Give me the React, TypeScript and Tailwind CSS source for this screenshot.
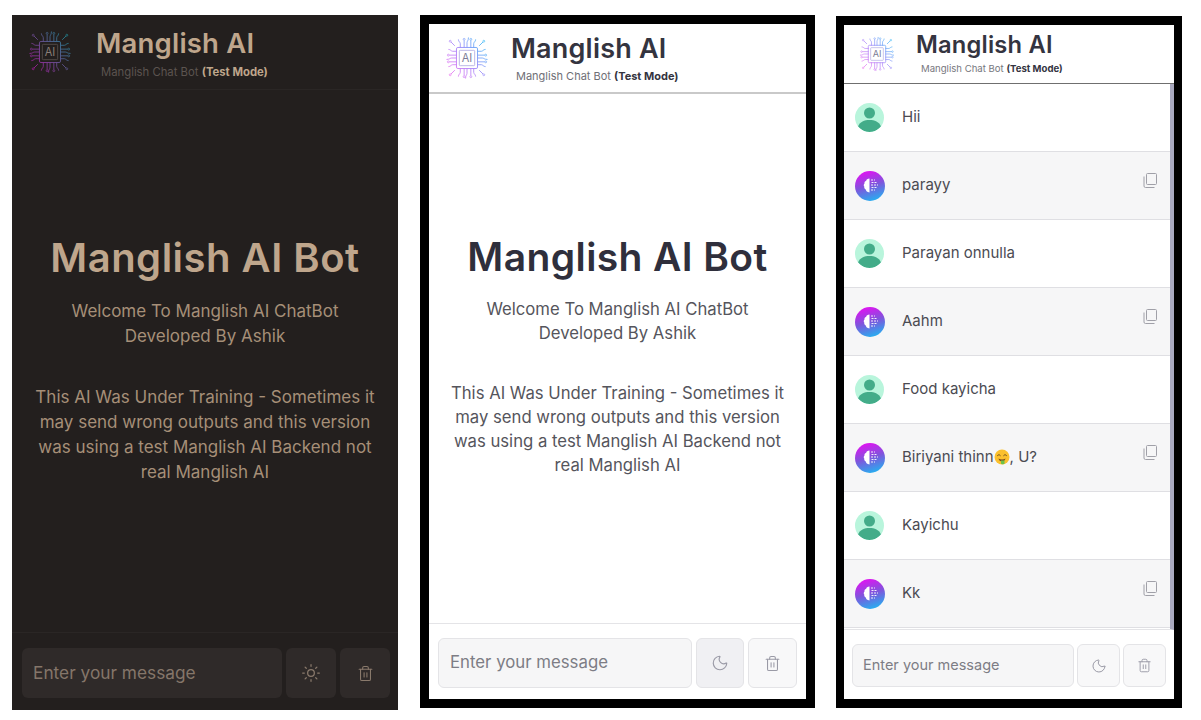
import { useId } from "react";
import { Moon, Sun, Trash2 } from "lucide-react";

function ChipLogo({ className, dark }: { className: string; dark?: boolean }) {
  const id = useId();
  const traces = [
    "M17 13V9c0-1.500-2-2-2-4", "M21 13V6", "M24 13V8c0-1.500 1.500-2 1.500-5", "M28 13V6", "M31 13V9c0-1.500 2-2 2-4",
    "M17 35v4c0 1.500-2 2-2 4", "M21 35v7", "M24 35v5c0 1.500-1.500 2-1.500 5", "M28 35v7", "M31 35v4c0 1.500 2 2 2 4",
    "M13 17H9c-1.500 0-2-2-4-2", "M13 21H6", "M13 24H8c-1.500 0-2 1.500-5 1.500", "M13 28H6", "M13 31H9c-1.500 0-2 2-4 2",
    "M35 17h4c1.500 0 2-2 4-2", "M35 21h7", "M35 24h5c1.500 0 2 1.500 5 1.500", "M35 28h7", "M35 31h4c1.500 0 2 2 4 2",
    "M11 11 7.500 7.500", "M37 11l3.500-3.500", "M11 37l-3.500 3.500", "M37 37l3.500 3.500",
  ];
  const dots = [[21, 4.500], [28, 4.500], [21, 43.500], [28, 43.500], [4.500, 21], [4.500, 28], [43.500, 21], [43.500, 28], [6.500, 6.500], [41.500, 6.500], [6.500, 41.500], [41.500, 41.500]];
  return (
    <svg viewBox="0 0 48 48" className={className} fill="none">
      <defs>
        <linearGradient id={id} gradientUnits="userSpaceOnUse" x1="4" y1="40" x2="44" y2="8">
          <stop offset="0" stopColor={dark ? "#a8189f" : "#ee78f0"} />
          <stop offset="0.500" stopColor={dark ? "#65508f" : "#a78bfa"} />
          <stop offset="1" stopColor={dark ? "#1c8b95" : "#3dbdf5"} />
        </linearGradient>
      </defs>
      <rect x="13" y="13" width="22" height="22" rx="1.500" stroke={`url(#${id})`} strokeWidth="1" />
      <rect x="16" y="16" width="16" height="16" rx="1" stroke={dark ? "#5d5450" : "#a9a3e0"} strokeWidth="0.800" />
      {traces.map((d) => (
        <path key={d} d={d} stroke={`url(#${id})`} strokeWidth="0.900" strokeLinecap="round" />
      ))}
      {dots.map(([cx, cy]) => (
        <circle key={`${cx}-${cy}`} cx={cx} cy={cy} r="1" stroke={`url(#${id})`} strokeWidth="0.700" />
      ))}
      <text x="24" y="28.300" textAnchor="middle" fontSize="11.500" fill={dark ? "#8a7f78" : "#7c7c96"} fontFamily="Inter, sans-serif">
        AI
      </text>
    </svg>
  );
}

function UserAvatar() {
  return (
    <div className="h-[29px] w-[29px] shrink-0 overflow-hidden rounded-full bg-[#b9f5dc]">
      <svg viewBox="0 0 29 29" className="h-full w-full">
        <circle cx="14.500" cy="10" r="5.500" fill="#43ac89" />
        <path d="M3 23.500c1.600-4.600 6.500-6.500 11.500-6.500s9.900 1.900 11.500 6.500c-2.800 3.500-6.800 5.500-11.500 5.500s-8.700-2-11.500-5.500z" fill="#43ac89" />
      </svg>
    </div>
  );
}

function BotAvatar() {
  const id = useId();
  return (
    <svg viewBox="0 0 30 30" className="h-[30px] w-[30px] shrink-0">
      <defs>
        <linearGradient id={id} x1="0.300" y1="0" x2="0.600" y2="1">
          <stop offset="0" stopColor="#e410f2" />
          <stop offset="0.500" stopColor="#7f55dc" />
          <stop offset="1" stopColor="#27aef0" />
        </linearGradient>
      </defs>
      <circle cx="15" cy="15" r="15" fill={`url(#${id})`} />
      <path d="M14.500 7.500c-2 0-3 1-3.300 2.200-1.300.4-1.900 1.500-1.700 2.700-.9.800-1 2.400-.2 3.200-.3 1.300.3 2.500 1.500 3 .2 1.500 1.300 2.800 3.700 2.900z" fill="#fff" />
      <path d="M16 9h4M16.500 11.500h5M16 14h7M16.500 16.500h5M16 19h4" stroke="#fff" strokeWidth="0.900" strokeDasharray="2 1" />
    </svg>
  );
}

function DroolEmoji() {
  return (
    <svg viewBox="0 0 16 16" className="inline-block h-[16px] w-[16px] align-[-3px]">
      <circle cx="8" cy="8" r="7.500" fill="#fbc02d" />
      <path d="M3.500 6.500c.8-1 2-1 2.800 0M9.700 6.500c.8-1 2-1 2.800 0" stroke="#6d4c1f" strokeWidth="1" fill="none" strokeLinecap="round" />
      <path d="M4.500 9.500c2 1.400 5 1.400 7 0-.4 2-1.800 3-3.500 3s-3.100-1-3.500-3z" fill="#7a4a1e" />
      <path d="M7 11.500h3.500v3c0 1-3.500 1-3.500 0z" fill="#6cc24a" />
    </svg>
  );
}

function CopyIcon() {
  return (
    <svg viewBox="0 0 14 15" className="mb-[11px] h-[15px] w-[14px] shrink-0" fill="none" stroke="#a0a0a8" strokeWidth="1">
      <rect x="3.500" y="0.500" width="10" height="11" rx="1" />
      <path d="M1 3.500v9.500a1.500 1.500 0 0 0 1.500 1.500h9" />
    </svg>
  );
}

const rows: { from: "user" | "bot"; text: string; emoji?: boolean }[] = [
  { from: "user", text: "Hii" },
  { from: "bot", text: "parayy" },
  { from: "user", text: "Parayan onnulla" },
  { from: "bot", text: "Aahm" },
  { from: "user", text: "Food kayicha" },
  { from: "bot", text: "Biriyani thinn", emoji: true },
  { from: "user", text: "Kayichu" },
  { from: "bot", text: "Kk" },
];

function ChatRow({ from, text, emoji }: { from: "user" | "bot"; text: string; emoji?: boolean }) {
  const isBot = from === "bot";
  return (
    <div className={`flex h-[68px] items-center border-b border-[#dfdfe3] pl-[11px] pr-[13px] ${isBot ? "bg-[#f6f6f7]" : "bg-white"}`}>
      {isBot ? <BotAvatar /> : <UserAvatar />}
      <p className={`flex-1 text-[15px] text-[#4b4b52] ${isBot ? "ml-[17px]" : "ml-[18px]"}`}>
        {text}
        {emoji && (
          <>
            <DroolEmoji />, U?
          </>
        )}
      </p>
      {isBot && <CopyIcon />}
    </div>
  );
}

const introLines = ["This AI Was Under Training - Sometimes it", "may send wrong outputs and this version", "was using a test Manglish AI Backend not", "real Manglish AI"];

export default function App() {
  return (
    <div className="flex h-[720px] w-[1201px] overflow-hidden bg-white pl-[12px] font-['Inter',sans-serif]">
      {/* dark */}
      <section className="mt-[15px] flex h-[695px] w-[386px] flex-col bg-[#231f1e]">
        <header className="flex h-[75px] items-center border-b border-[#2a2625] pl-[15px]">
          <ChipLogo dark className="h-[46px] w-[46px]" />
          <div className="ml-[23px] pt-[2px]">
            <h1 className="text-[27.500px] font-semibold leading-[32px] tracking-[0.2px] text-[#bfa68c]">Manglish AI</h1>
            <p className="ml-[5px] mt-[6px] text-[11.300px] leading-[14px] text-[#5c5450]">
              Manglish Chat Bot <b className="font-bold text-[#bfa68c]">(Test Mode)</b>
            </p>
          </div>
        </header>
        <div className="flex flex-1 flex-col items-center pt-[144px] text-center text-[#a68f78]">
          <h2 className="text-[40px] font-semibold leading-[48px] tracking-[0.5px] text-[#bfa68c]">Manglish AI Bot</h2>
          <p className="mt-[17px] text-[17px] leading-[25px]">Welcome To Manglish AI ChatBot<br />Developed By Ashik</p>
          <p className="mt-[36px] text-[17px] leading-[25px]">
            {introLines.map((line) => (
              <span key={line} className="block">{line}</span>
            ))}
          </p>
        </div>
        <footer className="flex h-[78px] gap-[4px] border-t border-[#2a2625] pl-[10px] pt-[15px]">
          <div className="flex h-[50px] w-[260px] items-center rounded-md bg-[#2f2a29] pl-[11px] text-[17.300px] text-[#85766a]">Enter your message</div>
          <div className="flex h-[50px] w-[50px] items-center justify-center rounded-md bg-[#2f2a29]"><Sun className="h-[20px] w-[20px] text-[#8a7a6c]" strokeWidth={1.500} /></div>
          <div className="flex h-[50px] w-[50px] items-center justify-center rounded-md bg-[#2f2a29]"><Trash2 className="h-[17px] w-[17px] text-[#8a7a6c]" strokeWidth={1.500} /></div>
        </footer>
      </section>

      {/* light */}
      <section className="ml-[22px] mt-[15px] flex h-[693px] w-[395px] flex-col border-[9px] border-black bg-white">
        <header className="flex h-[70px] items-center border-b-2 border-[#c9c9c9] pl-[15px]">
          <ChipLogo className="h-[46px] w-[46px]" />
          <div className="ml-[21px]">
            <h1 className="text-[27px] font-semibold leading-[32px] tracking-[0.2px] text-[#34343f]">Manglish AI</h1>
            <p className="ml-[5px] mt-[4px] text-[11px] leading-[14px] text-[#6f6f76]">
              Manglish Chat Bot <b className="font-bold text-[#34343f]">(Test Mode)</b>
            </p>
          </div>
        </header>
        <div className="flex flex-1 flex-col items-center pt-[139px] text-center text-[#55555c]">
          <h2 className="text-[39px] font-semibold leading-[48px] tracking-[0.4px] text-[#2f2f3c]">Manglish AI Bot</h2>
          <p className="mt-[16px] text-[16.700px] leading-[24px]">Welcome To Manglish AI ChatBot<br />Developed By Ashik</p>
          <p className="mt-[36px] text-[16.700px] leading-[24px]">
            {introLines.map((line) => (
              <span key={line} className="block">{line}</span>
            ))}
          </p>
        </div>
        <footer className="flex h-[76px] gap-[4px] border-t border-[#e4e4e7] px-[9px] pt-[14px]">
          <div className="flex h-[50px] w-[255px] items-center rounded-md border border-[#e4e4e7] bg-[#f6f6f7] pl-[11px] text-[16.800px] text-[#7d7d85]">Enter your message</div>
          <div className="flex h-[50px] w-[49px] items-center justify-center rounded-md border border-[#e4e4e7] bg-[#f0f0f3]"><Moon className="h-[18px] w-[18px] text-[#9a9aa6]" strokeWidth={1.500} /></div>
          <div className="flex h-[50px] w-[49px] items-center justify-center rounded-md border border-[#e4e4e7] bg-[#f8f8f9]"><Trash2 className="h-[17px] w-[17px] text-[#9a9aa6]" strokeWidth={1.500} /></div>
        </footer>
      </section>

      {/* chat */}
      <section className="ml-[21px] mt-[16px] flex h-[692px] w-[346px] flex-col border-[8px] border-t-[9px] border-b-[9px] border-black bg-white">
        <header className="flex h-[59px] shrink-0 items-center border-b border-[#6f6f6f] pl-[14px]">
          <ChipLogo className="h-[38px] w-[38px]" />
          <div className="ml-[20px] pb-[2px]">
            <h1 className="text-[23.700px] font-semibold leading-[28px] tracking-[0.2px] text-[#34343f]">Manglish AI</h1>
            <p className="ml-[5px] mt-[4px] text-[9.600px] leading-[12px] text-[#77777e]">
              Manglish Chat Bot <b className="font-bold text-[#34343f]">(Test Mode)</b>
            </p>
          </div>
        </header>
        <div className="flex h-[546px] shrink-0 flex-col overflow-hidden border-b border-r-[4px] border-b-[#e4e4e7] border-r-[#a9a9bf]">
          {rows.map((row) => (
            <ChatRow key={row.text} {...row} />
          ))}
        </div>
        <footer className="flex flex-1 gap-[3px] px-[8px] pt-[14px]">
          <div className="flex h-[43px] w-[223px] items-center rounded-md border border-[#e4e4e7] bg-[#f6f6f7] pb-[2px] pl-[10px] text-[14.500px] text-[#7d7d85]">Enter your message</div>
          <div className="flex h-[43px] w-[43px] items-center justify-center rounded-md border border-[#e4e4e7] bg-[#f8f8f9]"><Moon className="h-[16px] w-[16px] text-[#9a9aa6]" strokeWidth={1.500} /></div>
          <div className="flex h-[43px] w-[43px] items-center justify-center rounded-md border border-[#e4e4e7] bg-[#f8f8f9]"><Trash2 className="h-[15px] w-[15px] text-[#9a9aa6]" strokeWidth={1.500} /></div>
        </footer>
      </section>
    </div>
  );
}
